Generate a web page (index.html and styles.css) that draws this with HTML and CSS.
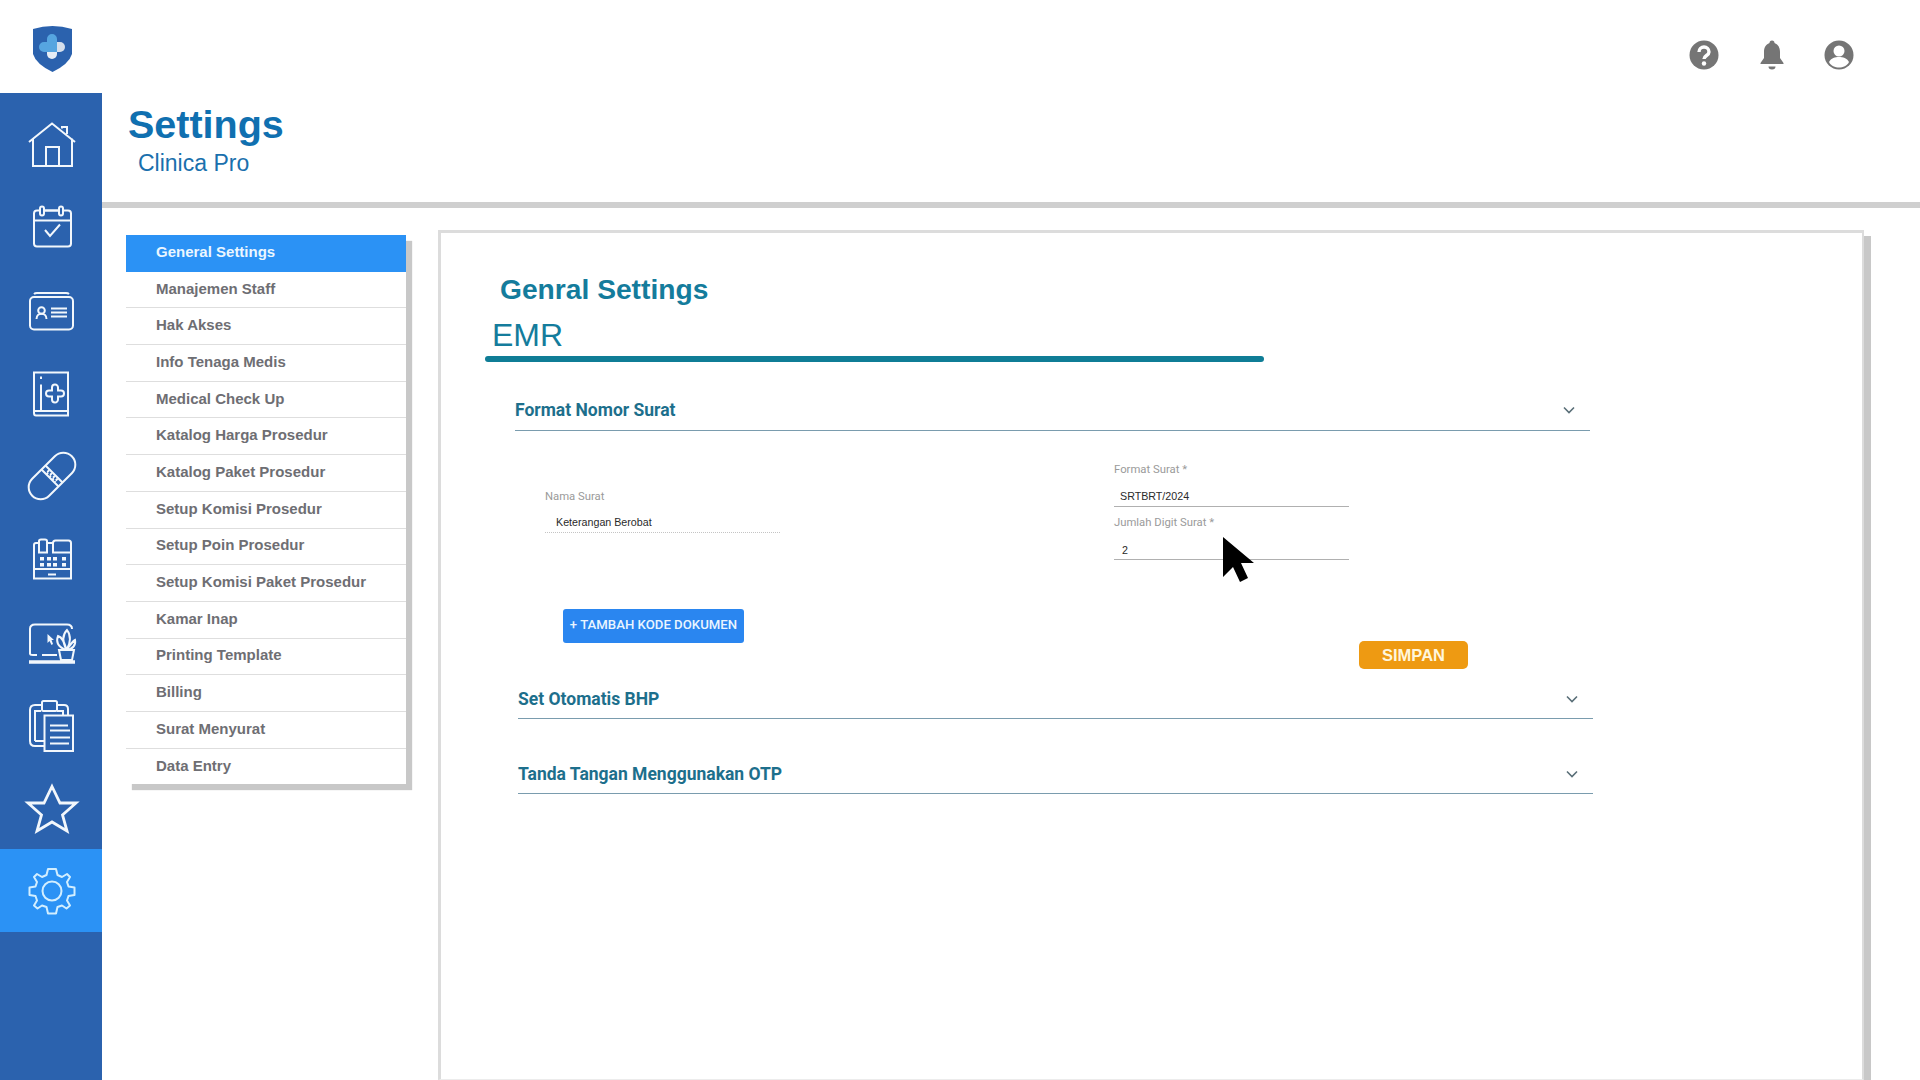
FILE: index.html
```html
<!DOCTYPE html>
<html lang="id">
<head>
<meta charset="utf-8">
<title>Settings - Clinica Pro</title>
<link rel="stylesheet" href="styles.css">
</head>
<body>
<div class="app">
  <header class="topbar">
    <div class="logo-cell">
      <svg class="logo" viewBox="0 0 39 47">
        <path d="M0 4 Q19.500 -2 39 4 V29 Q36 39 19.500 47 Q3 39 0 29Z" fill="#2b62ae"/>
        <rect x="18" y="17" width="14" height="10" rx="5" fill="#d5dfec"/>
        <rect x="14" y="20" width="10" height="14" rx="5" fill="#e6edf5"/>
        <path d="M14 14 a5 5 0 0 1 10 0 V27 H11 a5 5 0 0 1 0-10 h3Z" fill="#56a5e0"/>
      </svg>
    </div>
    <div class="top-actions">
      <svg class="top-icon" viewBox="0 0 30 30"><circle cx="15" cy="15" r="14.500" fill="#757575"/><path d="M10 12 a5 5 0 0 1 10 0 c0 3.500-5 3.500-5 7" fill="none" stroke="#fff" stroke-width="3.400"/><circle cx="15" cy="23.500" r="2.200" fill="#fff"/></svg>
      <svg class="top-icon" viewBox="0 0 30 30"><path d="M15 0.500 a2.500 2.500 0 0 1 2.500 2.500 c4 1.500 5.500 5 5.500 9 v6 l3.500 5 v1 h-23 v-1 l3.500-5 v-6 c0-4 1.500-7.500 5.500-9 A2.500 2.500 0 0 1 15 0.500Z" fill="#757575"/><path d="M11.500 26.500 h7 a3.500 3 0 0 1-7 0Z" fill="#757575"/></svg>
      <svg class="top-icon" viewBox="0 0 30 30"><circle cx="15" cy="15" r="14.500" fill="#757575"/><circle cx="15" cy="11" r="5.500" fill="#fff"/><path d="M5 22 c2-4 6-5 10-5 s8 1 10 5 c-2 4-6 5.500-10 5.500 S7 26 5 22Z" fill="#fff"/></svg>
    </div>
  </header>
  <div class="main">
    <nav class="sidebar">
      <a class="side-item">
        <svg class="side-icon" viewBox="0 0 50 50"><path d="M2 23 L25 4.500 L48 23 M6 19.500 V47 H45 V19.500 M19 47 V28 H32 V47 M35 9.500 V8 H40 V15"/></svg>
      </a>
      <a class="side-item">
        <svg class="side-icon" viewBox="0 0 50 50"><rect x="7" y="8.500" width="37" height="36" rx="3"/><path d="M7 18.500 H44 M18 28 L23 34 L33 22.500 M15 8.500 H34"/><rect class="fill-bg" x="13" y="4.500" width="4" height="9" rx="2"/><rect class="fill-bg" x="32" y="4.500" width="4" height="9" rx="2"/></svg>
      </a>
      <a class="side-item">
        <svg class="side-icon" viewBox="0 0 50 50"><rect x="3" y="12" width="43" height="32.500" rx="4"/><path d="M7 9 Q8 8 10 8 H39 Q41 8 42 9"/><circle cx="14.500" cy="25.500" r="3.300"/><path d="M9.500 34 c0-7 10-7 10 0"/><path d="M24 23.500 H40 M24 27.500 H40 M24 31.500 H40"/></svg>
      </a>
      <a class="side-item">
        <svg class="side-icon" viewBox="0 0 50 50"><path d="M7 4.500 H41 V47.500 H9 Q7 47.500 7 45Z M7 43 H41 M14 8.500 V11 M14 16.500 V43"/><path d="M25 19.500 a3 3 0 0 1 6 0 v3 h3 a3 3 0 0 1 0 6 h-3 v3 a3 3 0 0 1-6 0 v-3 h-3 a3 3 0 0 1 0-6 h3Z"/></svg>
      </a>
      <a class="side-item">
        <svg class="side-icon" viewBox="0 0 50 50"><rect x="-3" y="13" width="56" height="24" rx="12" transform="rotate(-45 25 25)"/><path d="M14.500 18.500 L31.500 35.500 M18.500 14.500 L35.500 31.500"/><path d="M20.500 19.500 L30.500 29.500 M19.500 22 L28.500 31" stroke-dasharray="2 2" stroke-width="2.500"/></svg>
      </a>
      <a class="side-item">
        <svg class="side-icon" viewBox="0 0 50 50"><path d="M12 9 H9 Q7 9 7 11 V44.500 H44 V18.500 M7 35 H44"/><path d="M12 18.500 V7 Q12 5.500 14 5.500 H18 Q20 5.500 20 7 V18.500Z"/><path d="M26 18.500 V9 Q26 6.500 28.500 6.500 H41.500 Q44 6.500 44 9 V18.500Z"/><path d="M20 9 H26"/><path class="dots" d="M13 23 h4 v3.500 h-4Z M20 23 h4 v3.500 h-4Z M26 23 h4 v3.500 h-4Z M35 23 h4 v3.500 h-4Z M13 29 h4 v3.500 h-4Z M20 29 h4 v3.500 h-4Z M26 29 h4 v3.500 h-4Z M35 29 h4 v3.500 h-4Z"/><path d="M21 40.500 H29"/></svg>
      </a>
      <a class="side-item">
        <svg class="side-icon" viewBox="0 0 50 50"><path d="M3 36.500 V12 Q3 7.500 8 7.500 H40 Q45 7.500 45 12 M30 38 H15 M3 36.500 Q3 38 6 38 H10"/><path d="M2 45 H48" stroke-width="3.500"/><path class="dots" d="M20.500 17 L20.500 26 L22.500 24 L24.500 28 L26 27 L24.500 23 L27 23Z"/><path d="M32 33 H47 L45 43 H34Z M39.500 33 C30 30 29 24 31 19 C35 20 37 24 39.500 33 C35 24 36 17 40 13 C44 18 44 26 39.500 33 C43 28 46 24 48 23 C49 28 46 32 39.500 33"/></svg>
      </a>
      <a class="side-item">
        <svg class="side-icon" viewBox="0 0 50 50"><path d="M14 5 H8 Q3 5 3 10 V41 Q3 46 8 46 H17 M30 5 H37 Q41 5 41 9 V15.500"/><path d="M8 41 V11 H14 M30 11 H36 V15.500 M8 41 H17"/><rect class="fill-solid" x="15" y="1" width="15" height="10" rx="1.500"/><path d="M17.500 15.500 H46 V51 H17.500Z M23 25.500 H41 M23 30.500 H43 M23 37.500 H43 M23 43.500 H42"/></svg>
      </a>
      <a class="side-item">
        <svg class="side-icon" viewBox="0 0 50 50"><path d="M25 3.500 L33 20 L49 20 L35.500 32 L40 48 L25 39 L10 48 L14.500 32 L1 20 L17 20Z" stroke-width="2.800"/></svg>
      </a>
      <a class="side-item is-active">
        <svg class="side-icon" viewBox="0 0 50 50"><circle cx="25" cy="25" r="9.500"/><path d="M21 3 H29 L30.500 9 L35 11 L40 8 L43 11 L40 16 L41.500 20.500 L47.500 21.500 V29 L41.500 30 L40 34.500 L43 39.500 L39.500 42.500 L35 39.500 L30.500 41 L29 47.500 H21 L19.500 41 L15 39.500 L10.500 42.500 L7 39.500 L10 34.500 L8.500 30 L2.500 29 V21.500 L8.500 20.500 L10 16 L7 11 L10 8 L15 11 L19.500 9Z" stroke-linejoin="round"/></svg>
      </a>
    </nav>
    <div class="page">
      <div class="page-head">
        <h1 class="page-title">Settings</h1>
        <p class="page-sub">Clinica Pro</p>
      </div>
      <div class="work">
        <ul class="menu">
          <li class="menu-item is-active">General Settings</li>
          <li class="menu-item">Manajemen Staff</li>
          <li class="menu-item">Hak Akses</li>
          <li class="menu-item">Info Tenaga Medis</li>
          <li class="menu-item">Medical Check Up</li>
          <li class="menu-item">Katalog Harga Prosedur</li>
          <li class="menu-item">Katalog Paket Prosedur</li>
          <li class="menu-item">Setup Komisi Prosedur</li>
          <li class="menu-item">Setup Poin Prosedur</li>
          <li class="menu-item">Setup Komisi Paket Prosedur</li>
          <li class="menu-item">Kamar Inap</li>
          <li class="menu-item">Printing Template</li>
          <li class="menu-item">Billing</li>
          <li class="menu-item">Surat Menyurat</li>
          <li class="menu-item">Data Entry</li>
        </ul>
        <section class="card">
          <h2 class="card-title">Genral Settings</h2>
          <h3 class="card-sub">EMR</h3>
          <div class="card-rule"></div>
          <div class="acc acc-first">
            <span class="acc-title">Format Nomor Surat</span>
            <svg class="chev" viewBox="0 0 12 8"><path d="M1 1.500 L6 6.500 L11 1.500"/></svg>
          </div>
          <div class="form-row">
            <div class="form-left">
              <div class="field field-dotted">
                <span class="field-label">Nama Surat</span>
                <span class="field-value">Keterangan Berobat</span>
              </div>
              <button class="btn-add">+ TAMBAH KODE DOKUMEN</button>
            </div>
            <div class="form-right">
              <div class="field field-first">
                <span class="field-label">Format Surat *</span>
                <span class="field-value">SRTBRT/2024</span>
              </div>
              <div class="field field-tight">
                <span class="field-label">Jumlah Digit Surat *</span>
                <span class="field-value field-num">2</span>
              </div>
              <button class="btn-save">SIMPAN</button>
            </div>
          </div>
          <div class="acc acc-second">
            <span class="acc-title">Set Otomatis BHP</span>
            <svg class="chev" viewBox="0 0 12 8"><path d="M1 1.500 L6 6.500 L11 1.500"/></svg>
          </div>
          <div class="acc acc-third">
            <span class="acc-title">Tanda Tangan Menggunakan OTP</span>
            <svg class="chev" viewBox="0 0 12 8"><path d="M1 1.500 L6 6.500 L11 1.500"/></svg>
          </div>
        </section>
      </div>
    </div>
  </div>
  <svg class="pointer" viewBox="0 0 32 46"><path d="M0 0 L31 26 L18 26 L25 41 L17 45 L10 30 L0 40Z" fill="#000"/></svg>
</div>
</body>
</html>
```
FILE: styles.css
```css
* { box-sizing: border-box; }
html, body { margin: 0; padding: 0; }
body { width: 1920px; height: 1080px; overflow: hidden; background: #fff; font-family: "Liberation Sans", Arial, sans-serif; }
.app { position: relative; width: 1920px; height: 1080px; display: flex; flex-direction: column; }

.topbar { height: 93px; display: flex; align-items: flex-start; flex: none; }
.logo-cell { width: 102px; height: 93px; display: flex; justify-content: center; padding: 25px 0 0 2px; }
.logo { width: 39px; height: 47px; }
.top-actions { margin-left: auto; display: flex; gap: 37.500px; padding: 40px 66px 0 0; }
.top-icon { width: 30px; height: 30px; display: block; }

.main { flex: 1; display: flex; min-height: 0; }
.sidebar { width: 102px; flex: none; background: #2b62ae; padding-top: 9px; display: flex; flex-direction: column; }
.side-item { height: 83px; padding-left: 2px; display: flex; align-items: center; justify-content: center; flex: none; }
.side-item.is-active { background: #2b92f5; }
.side-icon { width: 50px; height: 50px; fill: none; stroke: #f2f7fc; stroke-width: 2; overflow: visible; }
.side-icon .dots { fill: #f2f7fc; stroke: none; }
.side-icon .fill-bg { fill: #2b62ae; }
.side-icon .fill-solid { fill: #2b62ae; }
.is-active .side-icon { stroke: #d2eeff; }

.page { flex: 1; min-width: 0; display: flex; flex-direction: column; }
.page-head { height: 115px; flex: none; padding: 9px 0 0 26px; border-bottom: 6px solid #cfcfcf; }
.page-title { margin: 0; font-size: 39.500px; line-height: 45px; font-weight: 700; color: #1070b0; }
.page-sub { margin: 2px 0 0 10px; font-size: 23px; line-height: 28px; color: #1a70ad; }

.work { flex: 1; min-height: 0; display: flex; align-items: flex-start; padding: 22px 0 0 24px; }
.menu { list-style: none; margin: 5px 0 0; padding: 0; width: 280px; flex: none; background: #fff; box-shadow: 6px 6px 1px #c8c8c8; }
.menu-item { height: 36.700px; padding: 0 0 3px 30px; display: flex; align-items: center; font-size: 15px; font-weight: 700; color: #6e6e73; border-bottom: 1.500px solid #dedede; }
.menu-item:last-child { height: 35.500px; padding-bottom: 2px; border-bottom: 0; }
.menu-item.is-active { background: #2b92f5; color: #eaf6ff; border-bottom: 0; }

.card { width: 1426px; height: 850px; margin-left: 32px; flex: none; border: 3px solid #dcdcdc; border-right-width: 2px; border-bottom: 1px solid #ececec; box-shadow: 7px 6px 0 #c8c8c8; padding-left: 44px; background: #fff; }
.card-title { margin: 39px 0 0 15px; font-size: 28.200px; line-height: 34px; font-weight: 700; color: #147c9c; }
.card-sub { margin: 10.500px 0 0 7px; font-size: 32px; line-height: 36px; font-weight: 400; color: #147c9c; }
.card-rule { width: 779px; height: 6px; margin-top: 3.500px; background: #0f7d96; border-radius: 3px; }

.acc { width: 1075px; height: 38px; display: flex; align-items: center; justify-content: space-between; padding: 0 15px 2px 0; border-bottom: 1.500px solid #7a9cae; }
.acc-title { font-family: Roboto, sans-serif; font-size: 17.500px; font-weight: 700; color: #1d6f8c; }
.chev { width: 12px; height: 8px; fill: none; stroke: #5a6f78; stroke-width: 1.600; }
.acc-first { margin: 29px 0 0 30px; height: 40px; }
.acc-second { margin: 0 0 0 33px; }
.acc-third { margin: 37px 0 0 33px; }

.form-row { display: flex; margin-left: 60px; height: 250px; }
.form-left { width: 569px; padding-top: 59px; }
.form-right { width: 354px; padding-top: 32px; }
.field { width: 235px; height: 43px; display: flex; flex-direction: column; border-bottom: 1.500px solid #b0b0b0; }
.field-first { height: 44px; }
.field-first .field-value { margin-top: 14px; }
.field-dotted { border-bottom: 1.500px dotted #c4c4c4; }
.field-tight { height: 43.500px; margin-top: 9px; }
.field-label { font-family: Roboto, sans-serif; font-size: 11.300px; line-height: 13px; color: #9a9a9a; }
.field-value { margin: 13px 0 0 11px; font-size: 10.700px; line-height: 12px; color: #2a2a2a; }
.form-right .field-value { margin-left: 6px; }
.form-right .field-tight .field-value { margin: 15px 0 0 8px; }

.btn-add { display: block; width: 181px; height: 34px; margin: 75.500px 0 0 18px; padding: 0 0 2px; border: 0; border-radius: 3px; background: #2a86f0; color: #e9f5ff; font-family: Roboto, sans-serif; font-size: 13.200px; font-weight: 500; }
.btn-save { display: block; width: 109px; height: 28px; margin: 81.500px 0 0 245px; padding: 0; border: 0; border-radius: 5px; background: #ee9a12; color: #fff6dc; font-family: "Liberation Sans", Arial, sans-serif; font-size: 16.500px; font-weight: 700; }

.pointer { position: absolute; left: 1223px; top: 537px; width: 32px; height: 46px; }
```
